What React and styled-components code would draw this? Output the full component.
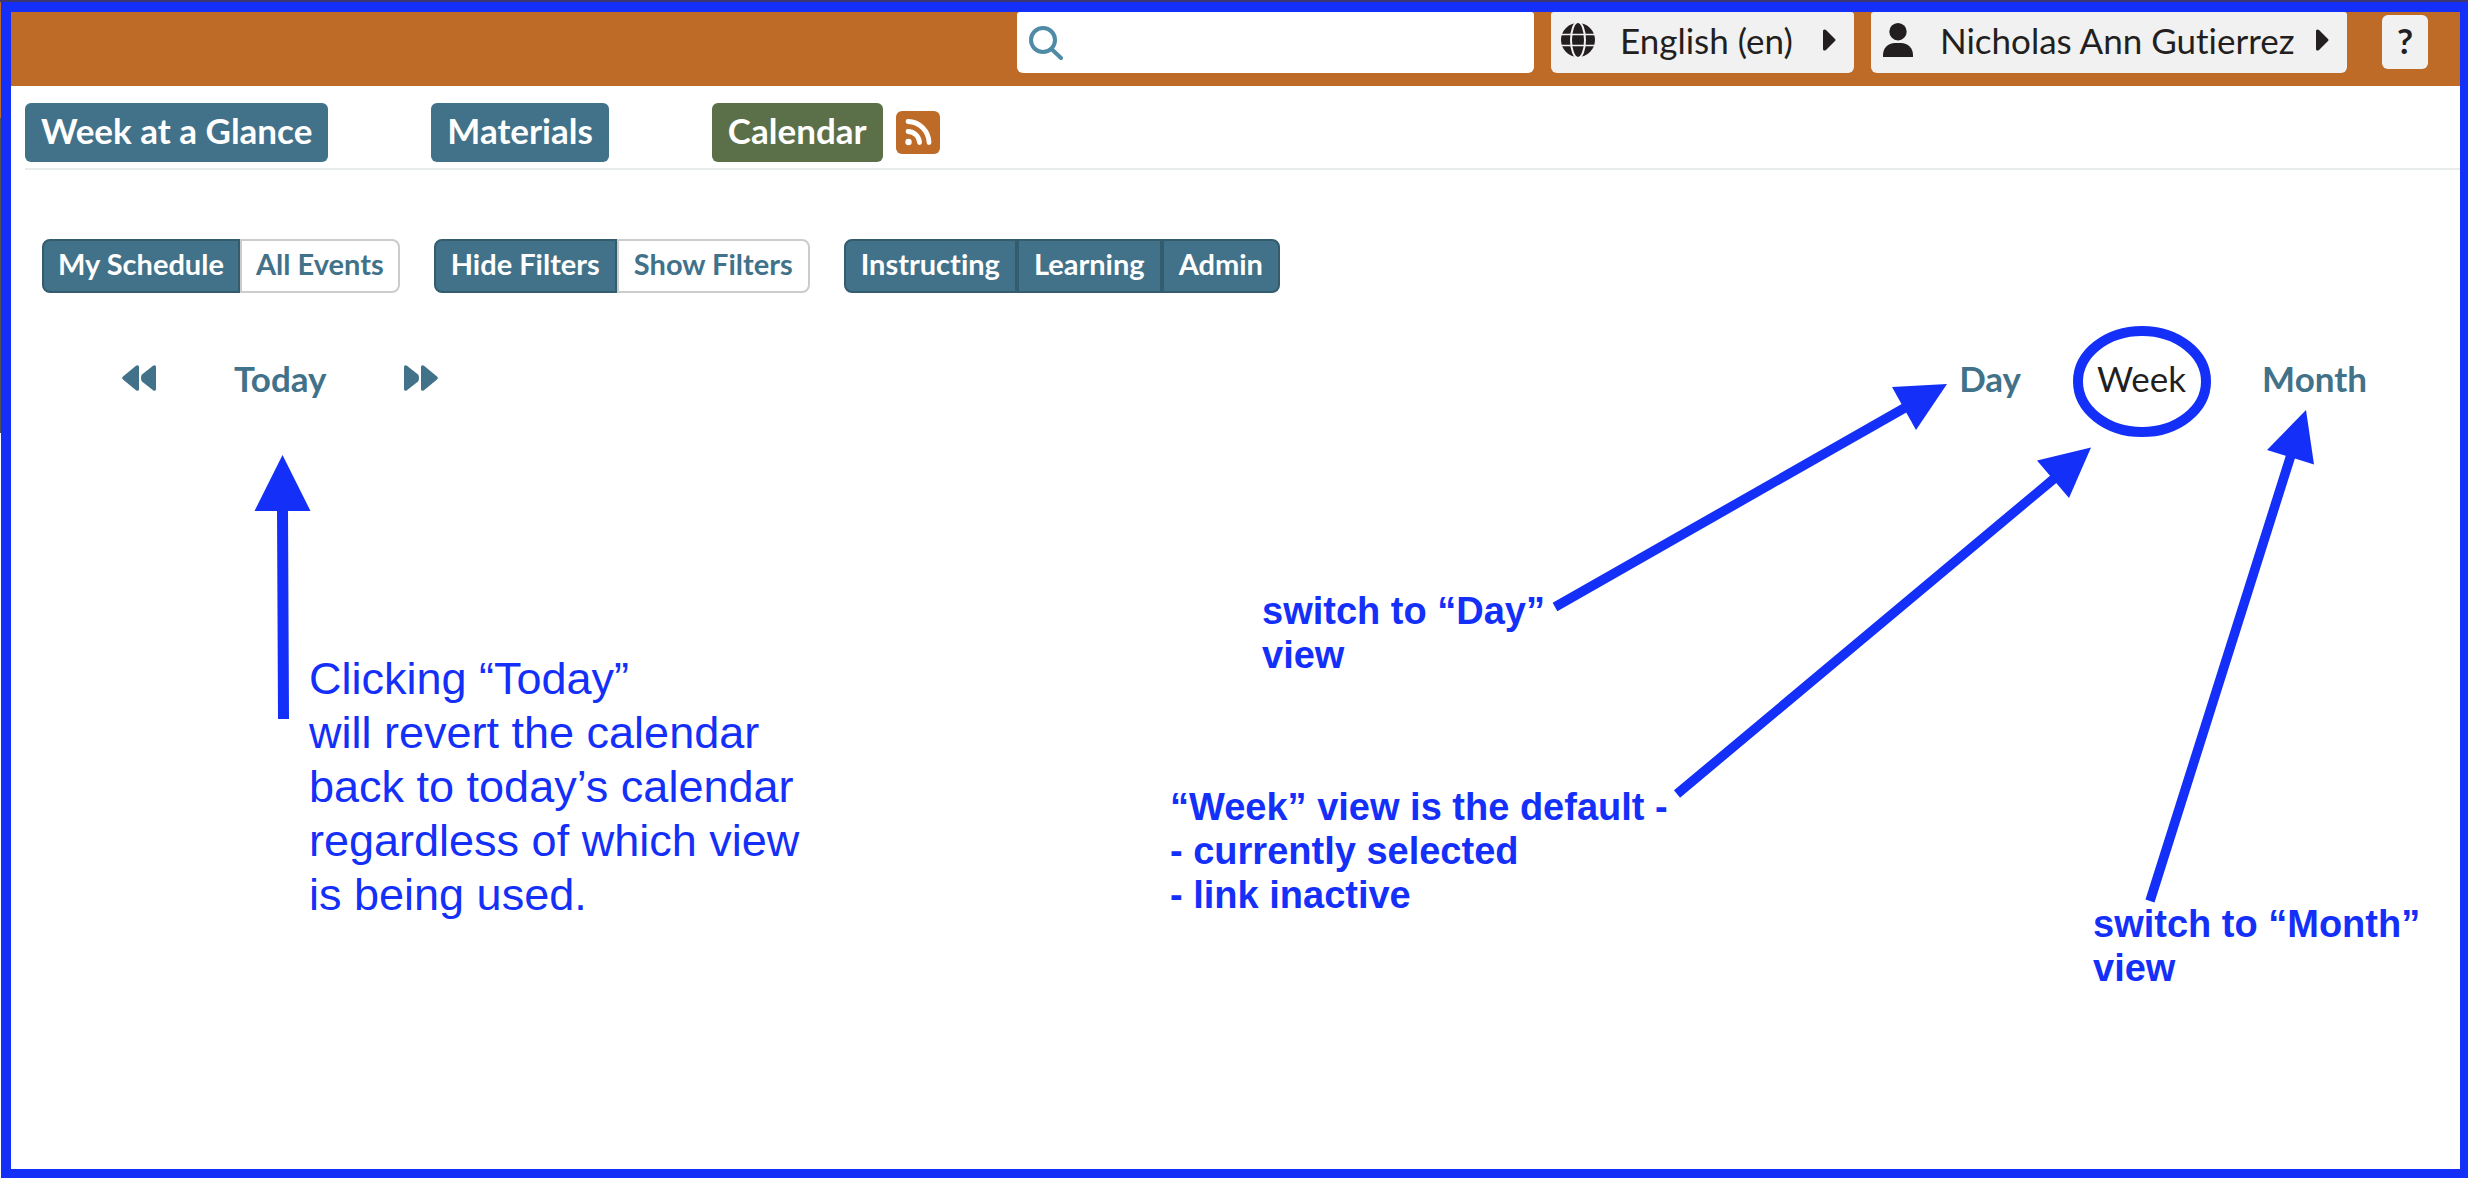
import React from "react";
import styled, { createGlobalStyle } from "styled-components";

const blue = "#1430f8";
const teal = "#417289";
const tealDark = "#335c6e";
const orange = "#bd6b26";
const ink = "#231f20";
const paper = "#f1f1f1";

const GlobalStyle = createGlobalStyle`
  *, *::before, *::after { box-sizing: border-box; }
  body {
    margin: 0;
    background: #fff;
    color: ${ink};
    font-family: Lato, "Open Sans", sans-serif;
    font-variant-ligatures: none;
  }
  button, input { font-family: inherit; font-variant-ligatures: inherit; }
  svg { display: block; flex: none; }
`;

const Backdrop = styled.div`
  min-height: 100vh;
  display: flex;
  padding: 2px 0 0 1px;
  background: linear-gradient(#3b3570 2px, ${orange} 2px 118px, #505050 118px 433px, #fff 433px);
`;

const Frame = styled.div`
  position: relative;
  flex: 1;
  display: flex;
  flex-direction: column;
  background: #fff;
  border: solid ${blue};
  border-width: 10px 8px 9px 10px;
`;

const Header = styled.header`
  display: flex;
  justify-content: flex-end;
  align-items: flex-start;
  gap: 17px;
  height: 74px;
  padding-right: 32px;
  background: ${orange};
`;

const SearchBox = styled.label`
  display: flex;
  align-items: center;
  gap: 12px;
  width: 517px;
  height: 61px;
  padding: 0 12px 0 12px;
  background: #fff;
  border-radius: 3px 3px 6px 6px;
`;

const SearchInput = styled.input`
  flex: 1;
  min-width: 0;
  height: 42px;
  border: 0;
  outline: 0;
  background: transparent;
  font-size: 35px;
`;

const MenuButton = styled.button`
  display: flex;
  align-items: center;
  gap: 17px;
  min-width: ${(p) => p.$width}px;
  height: 61px;
  padding: 0 18px 6px 10px;
  border: 0;
  border-radius: 3px 3px 6px 6px;
  background: ${paper};
  color: ${ink};
  font-size: 35px;
  line-height: 42px;
  text-align: left;
`;

const MenuText = styled.span`
  flex: 1;
  padding-left: 8px;
  white-space: nowrap;
`;

const HelpButton = styled.button`
  width: 46px;
  height: 54px;
  margin: 3px 0 0 18px;
  padding: 0 0 4px;
  border: 0;
  border-radius: 6px;
  background: ${paper};
  color: ${ink};
  font-size: 35px;
  font-weight: 700;
  line-height: 42px;
`;

const Nav = styled.nav`
  display: flex;
  gap: 103px;
  margin-left: 14px;
  padding: 17px 0 6px;
  border-bottom: 2px solid #e8ecec;
`;

const NavGroup = styled.div`
  display: flex;
  align-items: center;
  gap: 13px;
`;

const NavLink = styled.a`
  height: 59px;
  padding: 6px 16px 0;
  border-radius: 6px;
  background: ${(p) => (p.$active ? "#5b7048" : teal)};
  color: #fff;
  font-size: 35px;
  font-weight: 700;
  line-height: 42px;
  text-decoration: none;
  white-space: nowrap;
`;

const FeedLink = styled.a`
  display: block;
  border-radius: 6px;
  background: ${orange};
`;

const Filters = styled.div`
  display: flex;
  gap: 34px;
  padding: 69px 31px 0;
`;

const ToggleGroup = styled.div`
  display: flex;
`;

const Toggle = styled.button`
  height: 54px;
  padding: 0 ${(p) => p.$pad}px 4px;
  border: 2px solid ${(p) => (p.$on ? tealDark : "#ccc")};
  background: ${(p) => (p.$on ? teal : "#fff")};
  color: ${(p) => (p.$on ? "#fff" : teal)};
  font-size: 29px;
  font-weight: 700;
  line-height: 36px;
  white-space: nowrap;
  &:first-child { border-radius: 8px 0 0 8px; }
  &:last-child { border-radius: 0 8px 8px 0; }
`;

const CalendarBar = styled.div`
  display: flex;
  justify-content: space-between;
  align-items: center;
  padding: 64px 93px 0 111px;
`;

const BarGroup = styled.div`
  display: flex;
  align-items: center;
  gap: ${(p) => p.$gap}px;
`;

const BarLink = styled.a`
  color: ${teal};
  font-size: 35px;
  font-weight: 700;
  line-height: 42px;
  text-decoration: none;
`;

const CurrentView = styled.span`
  font-size: 35px;
  line-height: 42px;
`;

/* Markup drawn over the calendar, pinned to the side it points at. */
const Overlay = styled.div`
  position: absolute;
  top: 0;
  ${(p) => p.$side}: 0;
  width: ${(p) => p.$width}px;
  height: 100%;
  pointer-events: none;
`;

const Drawing = styled.svg`
  position: absolute;
  inset: 0;
`;

const Note = styled.p`
  position: absolute;
  left: ${(p) => p.$x}px;
  top: ${(p) => p.$y}px;
  margin: 0;
  color: ${blue};
  font-family: "Liberation Sans", Arial, sans-serif;
  font-size: ${(p) => (p.$large ? 45 : 38)}px;
  font-weight: ${(p) => (p.$large ? 400 : 700)};
  line-height: ${(p) => (p.$large ? 54 : 44)}px;
  white-space: pre-line;
`;

const SearchIcon = () => (
  <svg width="34" height="34" viewBox="0 0 34 34" fill="none" stroke="#4f8ba6" strokeWidth="4" aria-hidden="true">
    <circle cx="14" cy="14" r="12" />
    <path d="M22.5 23 L32 32" strokeLinecap="round" />
  </svg>
);

const GlobeIcon = () => (
  <svg width="34" height="34" viewBox="0 0 34 34" aria-hidden="true">
    <circle cx="17" cy="17" r="17" fill={ink} />
    <g fill="none" stroke={paper}>
      <ellipse cx="17" cy="17" rx="7" ry="18" strokeWidth="2" />
      <path d="M0 11.5H34M0 22.5H34" strokeWidth="1.5" />
    </g>
  </svg>
);

const UserIcon = () => (
  <svg width="34" height="34" viewBox="0 0 34 34" fill={ink} aria-hidden="true">
    <circle cx="17" cy="8.7" r="8.7" />
    <path d="M2 34V32C2 25 7 20 14 20H20C27 20 32 25 32 32V34Z" />
  </svg>
);

const CaretIcon = () => (
  <svg width="14" height="22" viewBox="0 0 14 22" fill={ink} aria-hidden="true">
    <path d="M1 1.6Q2.2-.4 4 1L13 10Q14 11 13 12L4 21Q2.2 22.4 1 20.4Z" />
  </svg>
);

const FeedIcon = () => (
  <svg width="44" height="43" viewBox="0 0 44 43" fill="none" stroke="#fff" strokeWidth="4.8" strokeLinecap="round" aria-hidden="true">
    <circle cx="12.5" cy="31" r="3.2" fill="#fff" stroke="none" />
    <path d="M12 20.5A11.5 11.5 0 0 1 23.5 31.5M12 10.5A21.5 21.5 0 0 1 33 31.5" />
  </svg>
);

const SkipIcon = ({ back }) => (
  <svg width="34" height="26" viewBox="0 0 34 26" fill={teal} aria-hidden="true">
    <g transform={back ? "translate(34 0) scale(-1 1)" : undefined}>
      <path d="M0 1.2Q1.2-.4 3 .8L14 9.5Q15 10.5 15 13T14 16.5L3 25.2Q1.2 26.4 0 24.8Z" />
      <path d="M17 1.2Q18.2-.4 20 .8L33 11.5Q34.6 13 33 14.5L20 25.2Q18.2 26.4 17 24.8Z" />
    </g>
  </svg>
);

const toggles = [
  { name: "Schedule", pad: 14, options: [["My Schedule", true], ["All Events", false]] },
  { name: "Filters", pad: 15, options: [["Hide Filters", true], ["Show Filters", false]] },
  { name: "Roles", pad: 15, options: [["Instructing", true], ["Learning", true], ["Admin", true]] },
];

export default function App() {
  return (
    <>
      <GlobalStyle />
      <Backdrop>
        <Frame>
          <Header>
            <SearchBox>
              <SearchIcon />
              <SearchInput type="search" aria-label="Search" />
            </SearchBox>
            <MenuButton type="button" aria-haspopup="menu" $width={303}>
              <GlobeIcon />
              <MenuText>English (en)</MenuText>
              <CaretIcon />
            </MenuButton>
            <MenuButton type="button" aria-haspopup="menu" $width={476}>
              <UserIcon />
              <MenuText>Nicholas Ann Gutierrez</MenuText>
              <CaretIcon />
            </MenuButton>
            <HelpButton type="button">?</HelpButton>
          </Header>

          <Nav>
            <NavLink href="#week">Week at a Glance</NavLink>
            <NavLink href="#materials">Materials</NavLink>
            <NavGroup>
              <NavLink href="#calendar" $active>Calendar</NavLink>
              <FeedLink href="#feed" aria-label="Calendar feed"><FeedIcon /></FeedLink>
            </NavGroup>
          </Nav>

          <main>
            <Filters>
              {toggles.map(({ name, pad, options }) => (
                <ToggleGroup key={name} role="group" aria-label={name}>
                  {options.map(([label, on]) => (
                    <Toggle key={label} type="button" aria-pressed={on} $on={on} $pad={pad}>{label}</Toggle>
                  ))}
                </ToggleGroup>
              ))}
            </Filters>
            <CalendarBar>
              <BarGroup $gap={78}>
                <BarLink href="#previous" aria-label="Previous"><SkipIcon back /></BarLink>
                <BarLink href="#today">Today</BarLink>
                <BarLink href="#next" aria-label="Next"><SkipIcon /></BarLink>
              </BarGroup>
              <BarGroup $gap={76}>
                <BarLink href="#day">Day</BarLink>
                <CurrentView>Week</CurrentView>
                <BarLink href="#month">Month</BarLink>
              </BarGroup>
            </CalendarBar>
          </main>

          <Overlay $side="left" $width={900}>
            <Drawing width="900" height="760" viewBox="11 12 900 760" fill={blue} aria-hidden="true">
              <path d="M282.5 455L310.5 511H288L289 719H278L277 511H254.5Z" />
            </Drawing>
            <Note $large $x={298} $y={640}>
              {"Clicking “Today”\nwill revert the calendar\nback to today’s calendar\nregardless of which view\nis being used."}
            </Note>
          </Overlay>

          <Overlay $side="right" $width={1300}>
            <Drawing width="1300" height="960" viewBox="1160 12 1300 960" fill={blue} aria-hidden="true">
              <ellipse cx="2142" cy="381.5" rx="64" ry="50.5" fill="none" stroke={blue} strokeWidth="10" />
              <path d="M1947 384L1892 387L1916 430Z" />
              <path d="M2091 447.5L2037 460.5L2069 498Z" />
              <path d="M2306 410L2267 450L2314 464.5Z" />
              <path d="M1555 607L1908 406M1677 794L2056 477M2150 901L2291 455" fill="none" stroke={blue} strokeWidth="9.5" />
            </Drawing>
            <Note $x={102} $y={577}>{"switch to “Day”\nview"}</Note>
            <Note $x={10} $y={773}>{"“Week” view is the default -\n- currently selected\n- link inactive"}</Note>
            <Note $x={933} $y={890}>{"switch to “Month”\nview"}</Note>
          </Overlay>
        </Frame>
      </Backdrop>
    </>
  );
}
